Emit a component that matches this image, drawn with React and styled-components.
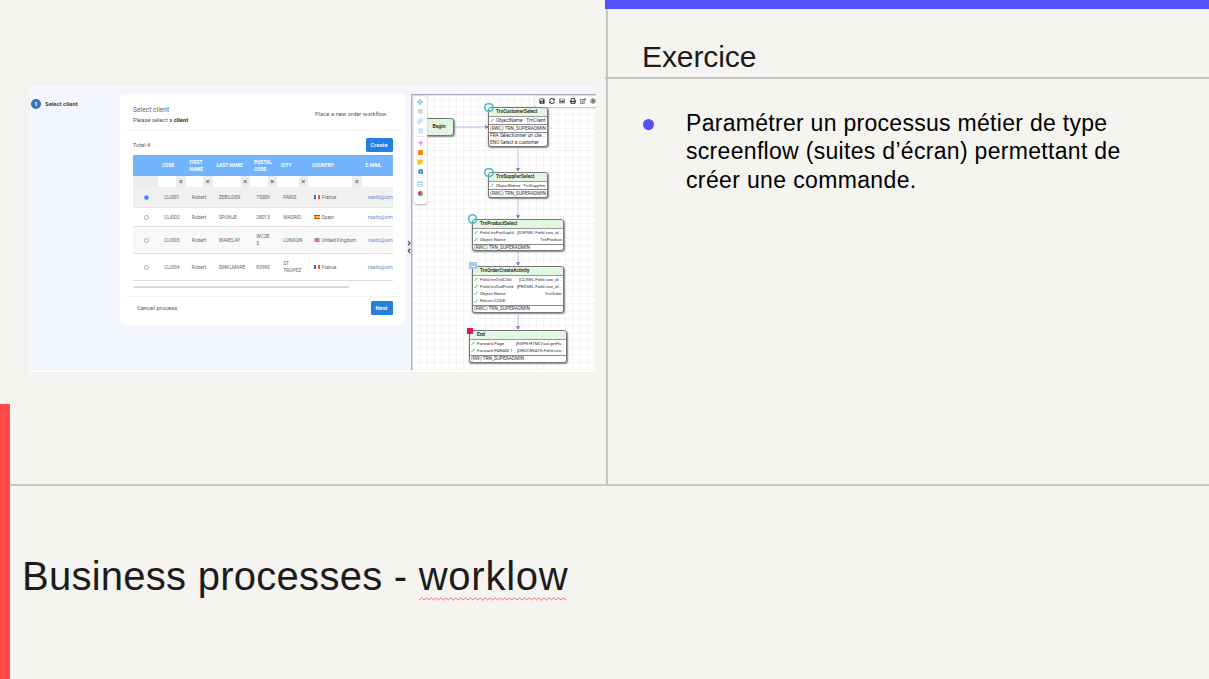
import React from 'react';
import styled, { createGlobalStyle } from 'styled-components';
import { Settings } from 'lucide-react';
import { FaSave, FaSyncAlt, FaRegImage, FaPrint, FaRegEdit, FaArrowsAlt, FaCommentAlt, FaLink, FaFileAlt, FaPlus, FaStickyNote, FaInfoCircle, FaTable } from 'react-icons/fa';

const Global = createGlobalStyle`
  * { box-sizing: border-box; }
  html, body { margin: 0; background: #f5f4f0; }
  body { font-family: "Liberation Sans", Arial, sans-serif; color: #1c1c1c; }
`;
const Slide = styled.main`
  position: relative; width: 1209px; height: 679px; overflow: hidden;
  display: grid; grid-template-columns: 606px 603px; grid-template-rows: 484px 195px;
  background: #f5f4f0;
`;
const RedBar = styled.div`
  position: absolute; left: 0; top: 403.5px; width: 10px; height: 276px; background: #ff4b48;
`;
const Left = styled.section` padding: 86px 0 0 29px; `;
const Right = styled.section`
  border-left: 2px solid #c6c6c4; display: flex; flex-direction: column;
`;
const Accent = styled.div` height: 9px; margin-left: -3px; background: #5452ff; `;
const Heading = styled.h2`
  margin: 0 0 0 -3px; height: 70px; padding: 30px 0 0 37px; border-bottom: 2px solid #c6c6c4;
  font-size: 30px; line-height: 36px; font-weight: 400; letter-spacing: -0.1px;
`;
const Bullets = styled.ul`
  list-style: none; margin: 30px 0 0; padding: 0 0 0 35px; color: #000;
`;
const Bullet = styled.li`
  display: flex; gap: 32px; font-size: 23px; line-height: 28.4px; white-space: nowrap;
  &::before { content: ''; width: 11px; height: 11px; border-radius: 50%; background: #5452ff; margin-top: 10px; }
`;
const Line = styled.div` letter-spacing: ${p => p.$ls}px; `;
const Footer = styled.section`
  grid-column: 1 / 3; margin-left: 10px; border-top: 2px solid #c6c6c4; padding: 66px 0 0 12px;
`;
const Title = styled.h1`
  margin: 0; font-size: 40px; line-height: 48px; font-weight: 400; letter-spacing: 0.26px; white-space: nowrap;
`;
const Misspelt = styled.span` position: relative; display: inline-block; letter-spacing: 0.75px; `;
const Squiggle = styled.svg` position: absolute; left: 0; bottom: -1px; width: 149px; height: 4px; `;

const Shot = styled.div`
  position: relative; width: 567px; height: 285.5px; background: #f3f7fd; border-bottom: 2px solid #fff;
  border-top: 2px solid #f8f9fa; overflow: hidden; display: flex;
  font-family: Roboto, sans-serif; font-size: 5.8px; color: #555;
`;
const Steps = styled.div` width: 91px; padding: 10.5px 0 0 2px; display: flex; gap: 4px; align-items: flex-start; line-height: 10px; font-size: 5.9px; font-weight: 700; color: #444; `;
const StepNo = styled.span` width: 10px; height: 10px; border-radius: 50%; background: #3274bd; color: #fff; text-align: center; `;
const Card = styled.div`
  width: 285.5px; height: 231px; margin-top: 6px; background: #fff; border-radius: 5px; padding: 0 6px;
`;
const CardHead = styled.header`
  height: 37px; border-bottom: 1px solid #efefef; padding: 11px 13px 0 7px; display: flex; justify-content: space-between;
`;
const CardTitle = styled.div` font-size: 6.7px; line-height: 11px; color: #666; `;
const CardSub = styled.div` font-size: 5.85px; line-height: 8px; b { color: #333; } `;
const Workflow = styled.div` font-size: 5.85px; line-height: 8px; padding-top: 5px; `;
const ListBar = styled.div`
  height: 24px; padding: 7px 7px 0 7px; display: flex; justify-content: space-between; line-height: 14px; font-size: 5.6px;
`;
const Button = styled.button`
  width: ${p => p.$w}px; height: 14px; border: 0; padding: 0; border-radius: 1.5px; background: #2480de; color: #fff;
  font: 500 5.8px/14px Roboto, sans-serif;
`;
const Table = styled.div` margin: 0 7px; width: 260px; overflow: hidden; border-bottom: 1px solid #dcdcdc; `;
const Row = styled.div`
  display: grid; grid-template-columns: 25px 27.5px 27px 37.5px 27px 31px 53.5px 31.5px; align-items: center;
  height: ${p => p.$h}px; background: ${p => p.$bg || '#fff'}; font-size: 4.85px; line-height: 7px; color: #666;
  ${p => p.$line && 'border-bottom: 1px solid #e4e4e4;'}
`;
const HeadRow = styled(Row)` background: #72b4fe; color: #fff; font-weight: 700; font-size: 4.75px; `;
const HeadCell = styled.div` padding-left: 4px; white-space: pre-line; `;
const Cell = styled.div` padding: 1.4px 0 0 6.2px; white-space: pre-line; display: flex; align-items: center; gap: 1.6px; `;
const Mail = styled(Cell)` color: #6c8bca; white-space: nowrap; `;
const Filter = styled.div` height: 11px; background: #ececec; display: flex; justify-content: space-between; `;
const Input = styled.div` flex: 1; background: #fff; `;
const Clear = styled.span` width: 9.5px; text-align: center; font-size: 7.5px; line-height: 11px; font-weight: 700; color: #777; `;
const Radio = styled.span`
  width: 5px; height: 5px; border-radius: 50%; margin-left: 5.3px; background: #fff; flex: none;
  border: 1px solid ${p => p.$on ? '#4a8ff5' : '#aaa'};
  display: grid; place-items: center;
  &::after { content: ''; width: 3px; height: 3px; border-radius: 50%; background: ${p => p.$on ? '#2d7cf0' : 'transparent'}; }
`;
const Scroll = styled.div` width: 216px; height: 2.5px; margin: 5px 0 0 7px; background: #d9d9d9; border-radius: 1px; `;
const CardFoot = styled.footer`
  margin-top: 7.5px; border-top: 1px solid #f3f3f3; padding: 4px 7px 0 11px; display: flex; justify-content: space-between; line-height: 14px; font-size: 5.9px;
`;
const Splitter = styled.div` width: 5.5px; padding-top: 152px; svg { display: block; } `;
const Canvas = styled.div`
  position: relative; width: 185px; height: 278px; margin-top: 6px; overflow: hidden;
  border-left: 1px solid #a9acb2; border-top: 1px solid #a9acb2; background-color: #fff;
  background-image: linear-gradient(#f3f3f4 1px, transparent 1px), linear-gradient(90deg, #f3f3f4 1px, transparent 1px);
  background-size: 7.3px 7.3px; background-position: 0 4px; box-shadow: inset 0.6px 0.6px 0 #cfd1d5;
  font-size: 4.8px; color: #333;
`;
const Edges = styled.svg` position: absolute; inset: 0; width: 184px; height: 277px; `;
const Node = styled.div`
  position: absolute; left: ${p => p.$x - 412}px; top: ${p => p.$y - 95}px; width: ${p => p.$w}px; height: ${p => p.$h}px;
  border: 1px solid #777; border-radius: 3px; background: #fff; box-shadow: 0.7px 1px 1.5px #888; overflow: hidden;
`;
const NodeTitle = styled.div`
  height: 9px; background: #e3f6e1; border-bottom: 1px solid #999; padding-left: 7px;
  font-size: 4.75px; line-height: 8px; font-weight: 700; white-space: nowrap;
`;
const NodeRow = styled.div`
  height: 7.3px; line-height: 7.3px; padding: 0 1px; display: flex; white-space: nowrap; justify-content: space-between; align-items: center;
  ${p => p.$ruled && 'border-top: 1px solid #888;'}
  ${p => p.$small && 'font-size: 4.4px;'}
`;
const Key = styled.span` display: inline-flex; gap: 2px; align-items: center; `;
const Begin = styled(Node)` background: #e3f6e1; text-align: center; font-weight: 700; line-height: 15px; font-size: 5px; `;
const Ring = styled.i`
  position: absolute; left: ${p => p.$x - 416.7}px; top: ${p => p.$y - 99.7}px; width: 9.4px; height: 9.4px; border-radius: 50%; box-shadow: inset 0 0 0 1.5px #43bccb;
`;
const EndMark = styled.i` position: absolute; left: 55px; top: 233px; width: 5.5px; height: 5.5px; background: #d81b60; `;
const FormMark = styled.i`
  position: absolute; left: 56.5px; top: 167px; width: 8px; height: 7px; background: #9ccbf9; border-radius: 0.5px;
  &::after { content: ''; position: absolute; left: 2px; top: 4px; width: 4.5px; height: 1px; background: #fff; }
`;
const TopTools = styled.div`
  position: absolute; left: 123px; top: 0.5px; width: 66px; height: 11.7px; border-radius: 3px; background: #fff; box-shadow: 0 0.5px 2px #999;
  display: flex; gap: 4.2px; padding: 2.8px 0 0 4px; color: #333;
`;
const SideTools = styled.div`
  position: absolute; left: 1.5px; top: 0.5px; width: 13.5px; height: 108px; border-radius: 3px; background: #fff; box-shadow: 0 0.5px 2px #aaa;
  display: flex; flex-direction: column; align-items: center; padding-top: 3.8px; gap: 3.5px;
`;
const Tool = styled.span` width: 6px; height: 6px; display: grid; place-items: center; color: ${p => p.$c}; `;
const Swatch = styled.span` width: 5.4px; height: 5.4px; border-radius: ${p => p.$round ? '50%' : '0.5px'}; background: ${p => p.$bg}; `;
const Rule = styled.span` width: 10px; height: 1px; margin: -0.9px 0; background: #eee; `;
const FlagBox = styled.svg` width: 6px; height: 4.2px; flex: none; `;

function Flag({ c }) {
  return (
    <FlagBox viewBox="0 0 12 8" preserveAspectRatio="none">
      {c === 'fr' && <><rect width="4" height="8" fill="#4a62c0" /><rect x="4" width="4" height="8" fill="#fff" /><rect x="8" width="4" height="8" fill="#f25a40" /></>}
      {c === 'es' && <><rect width="12" height="8" fill="#d5342b" /><rect y="2" width="12" height="4" fill="#f8c62d" /><rect x="2" y="3" width="2" height="2" fill="#a44" /></>}
      {c === 'gb' && <><rect width="12" height="8" fill="#6f80bb" /><path d="M0 0L12 8M12 0L0 8" stroke="#fff" strokeWidth="1.2" /><path d="M0 4H12" stroke="#fff" strokeWidth="3.4" /><path d="M6 0V8M0 4H12" stroke="#e0404b" strokeWidth="2" /></>}
    </FlagBox>
  );
}
const Tick = () => <svg width="4" height="5" viewBox="0 0 8 10"><path d="M1 8L7 1.5" stroke="#48a84b" strokeWidth="1.8" fill="none" /></svg>;

const heads = ['', 'CODE', 'FIRST\nNAME', 'LAST NAME', 'POSTAL\nCODE', 'CITY', 'COUNTRY', 'E-MAIL'];
const clients = [
  { h: 20.5, bg: '#f0f0f0', on: true, v: ['CLI001', 'Robert', 'ZEBILDER', '75009', 'PARIS'], flag: 'fr', country: 'France' },
  { h: 19, bg: '#fff', v: ['CLI002', 'Robert', 'SPONJE', '28013', 'MADRID'], flag: 'es', country: 'Spain' },
  { h: 27, bg: '#f8f8f8', v: ['CLI003', 'Robert', 'WARELAY', 'WC2B\n5', 'LONDON'], flag: 'gb', country: 'United Kingdom' },
  { h: 26, bg: '#fff', v: ['CLI004', 'Robert', 'SINKLMARE', '83990', 'ST\nTROPEZ'], flag: 'fr', country: 'France' },
];
const nodes = [
  { x: 488, y: 107, w: 59.5, h: 40, t: 'TrnCustomerSelect', rows: [['ObjectName', 'TrnClient']], role: '(RWC) TRN_SUPERADMIN', notes: ['FRA Sélectionner un clie...', 'ENU Select a customer'] },
  { x: 488, y: 172, w: 59.5, h: 25.5, t: 'TrnSupplierSelect', rows: [['ObjectName', 'TrnSupplier']], role: '(RWC) TRN_SUPERADMIN' },
  { x: 472, y: 219, w: 92, h: 32, t: 'TrnProductSelect', small: true, rows: [['Field.trnProSupId', '[SUPSEL.Field.row_id...'], ['Object.Name', 'TrnProduct']], role: '(RWC) TRN_SUPERADMIN' },
  { x: 472, y: 265.5, w: 92, h: 47, t: 'TrnOrderCreateActivity', small: true, rows: [['Field.trnOrdCliId', '[CLISEL.Field.row_id...'], ['Field.trnOrdProId', '[PROSEL.Field.row_id...'], ['Object.Name', 'TrnOrder'], ['Return.CODE', '']], role: '(RWC) TRN_SUPERADMIN' },
  { x: 469, y: 330, w: 97.5, h: 32.5, t: 'End', small: true, rows: [['Forward.Page', '[EXPR:HTMLTool.getFo...'], ['Forward.PARAM.1', '[ORDCREATE:Field.row...']], role: '(RW) TRN_SUPERADMIN' },
];
const toolIcons = [FaSave, FaSyncAlt, FaRegImage, FaPrint, FaRegEdit];
const zigzag = 'M0 3 ' + Array.from({ length: 60 }, (_, i) => `L${(i + 1) * 2.45} ${i % 2 ? 3 : 0.8}`).join(' ');

function ClientCard() {
  return (
    <Card>
      <CardHead>
        <div><CardTitle>Select client</CardTitle><CardSub>Please select a <b>client</b></CardSub></div>
        <Workflow>Place a new order workflow</Workflow>
      </CardHead>
      <ListBar><span>Total 4</span><Button $w={27}>Create</Button></ListBar>
      <Table>
        <HeadRow $h={21}>{heads.map((h, i) => <HeadCell key={i}>{h}</HeadCell>)}</HeadRow>
        <Row $h={11} $bg="#ececec">
          {heads.map((h, i) => <Filter key={i}>{i > 0 && <Input />}{i > 0 && i < 7 && <Clear>×</Clear>}</Filter>)}
        </Row>
        {clients.map((c, i) => (
          <Row key={i} $h={c.h} $bg={c.bg} $line={i < 3}>
            <Cell><Radio $on={c.on} /></Cell>
            {c.v.map((v, j) => <Cell key={j}>{v}</Cell>)}
            <Cell><Flag c={c.flag} />{c.country}</Cell>
            <Mail>nseitz@sim</Mail>
          </Row>
        ))}
      </Table>
      <Scroll />
      <CardFoot><span>Cancel process</span><Button $w={22}>Next</Button></CardFoot>
    </Card>
  );
}

function Diagram() {
  return (
    <Canvas>
      <Edges viewBox="412 95 184 277">
        <g stroke="#cfcff6" strokeWidth="1.4" fill="none">
          <path d="M454 127H487M518 147V171M518 197V218M518 250V265M518 312V329" />
        </g>
        <g stroke="#667" strokeWidth="0.8" fill="#99a">
          {[171, 218, 265, 329].map(y => <path key={y} d={`M516.5 ${y - 3}L518 ${y}L519.5 ${y - 3}`} />)}
          <path d="M485 125.5L488 127L485 128.5" />
        </g>
      </Edges>
      <Begin $x={424} $y={118} $w={30} $h={17.5}>Begin</Begin>
      {nodes.map(n => (
        <Node key={n.t} $x={n.x} $y={n.y} $w={n.w} $h={n.h}>
          <NodeTitle>{n.t}</NodeTitle>
          {n.rows.map(([k, v]) => <NodeRow key={k} $small={n.small || v === 'TrnSupplier'}><Key><Tick />{k}</Key><span>{v}</span></NodeRow>)}
          <NodeRow $ruled>{n.role}</NodeRow>
          {n.notes && n.notes.map((t, i) => <NodeRow key={t} $ruled={i === 0}>{t}</NodeRow>)}
        </Node>
      ))}
      <Ring $x={489} $y={107.3} /><Ring $x={489} $y={172.5} /><Ring $x={472.5} $y={219} />
      <FormMark /><EndMark />
      <TopTools>{toolIcons.map((I, i) => <I key={i} size={6} />)}<Settings size={6} strokeWidth={3} /></TopTools>
      <SideTools>
        <Tool $c="#62b5f5"><FaArrowsAlt size={6} /></Tool>
        <Tool $c="#d4d4d4"><FaCommentAlt size={5.5} /></Tool>
        <Tool $c="#a5d2f8"><FaLink size={6} /></Tool>
        <Tool $c="#bfdef8"><FaFileAlt size={5.5} /></Tool>
        <Rule />
        <Tool $c="#c77bd0"><FaPlus size={5.5} /></Tool>
        <Tool><Swatch $bg="#fb8c0a" /></Tool>
        <Tool $c="#fbc010"><FaStickyNote size={6} /></Tool>
        <Tool $c="#2196e8"><FaInfoCircle size={5.5} /></Tool>
        <Rule />
        <Tool $c="#a5d2f8"><FaTable size={6} /></Tool>
        <Tool><Swatch $round $bg="conic-gradient(#f44336, #ff9800, #4caf50, #2196f3, #9c27b0, #f44336)" /></Tool>
      </SideTools>
    </Canvas>
  );
}

export default function App() {
  return (
    <>
      <Global />
      <Slide>
        <Left>
          <Shot>
            <Steps><StepNo>1</StepNo>Select client</Steps>
            <ClientCard />
            <Splitter>
              <svg width="5" height="16" viewBox="0 0 5 16" fill="none" stroke="#333" strokeWidth="1.1"><path d="M2 1L4 3.2L2 5.4M4.2 8.6L2.2 10.8L4.2 13" /></svg>
            </Splitter>
            <Diagram />
          </Shot>
        </Left>
        <Right>
          <Accent />
          <Heading>Exercice</Heading>
          <Bullets>
            <Bullet>
              <div>
                <Line $ls={0.29}>Paramétrer un processus métier de type</Line>
                <Line $ls={0.31}>screenflow (suites d’écran) permettant de</Line>
                <Line $ls={0.36}>créer une commande.</Line>
              </div>
            </Bullet>
          </Bullets>
        </Right>
        <Footer>
          <Title>Business processes - <Misspelt>worklow<Squiggle><path d={zigzag} fill="none" stroke="#f0605f" strokeWidth="0.9" /></Squiggle></Misspelt></Title>
        </Footer>
        <RedBar />
      </Slide>
    </>
  );
}
